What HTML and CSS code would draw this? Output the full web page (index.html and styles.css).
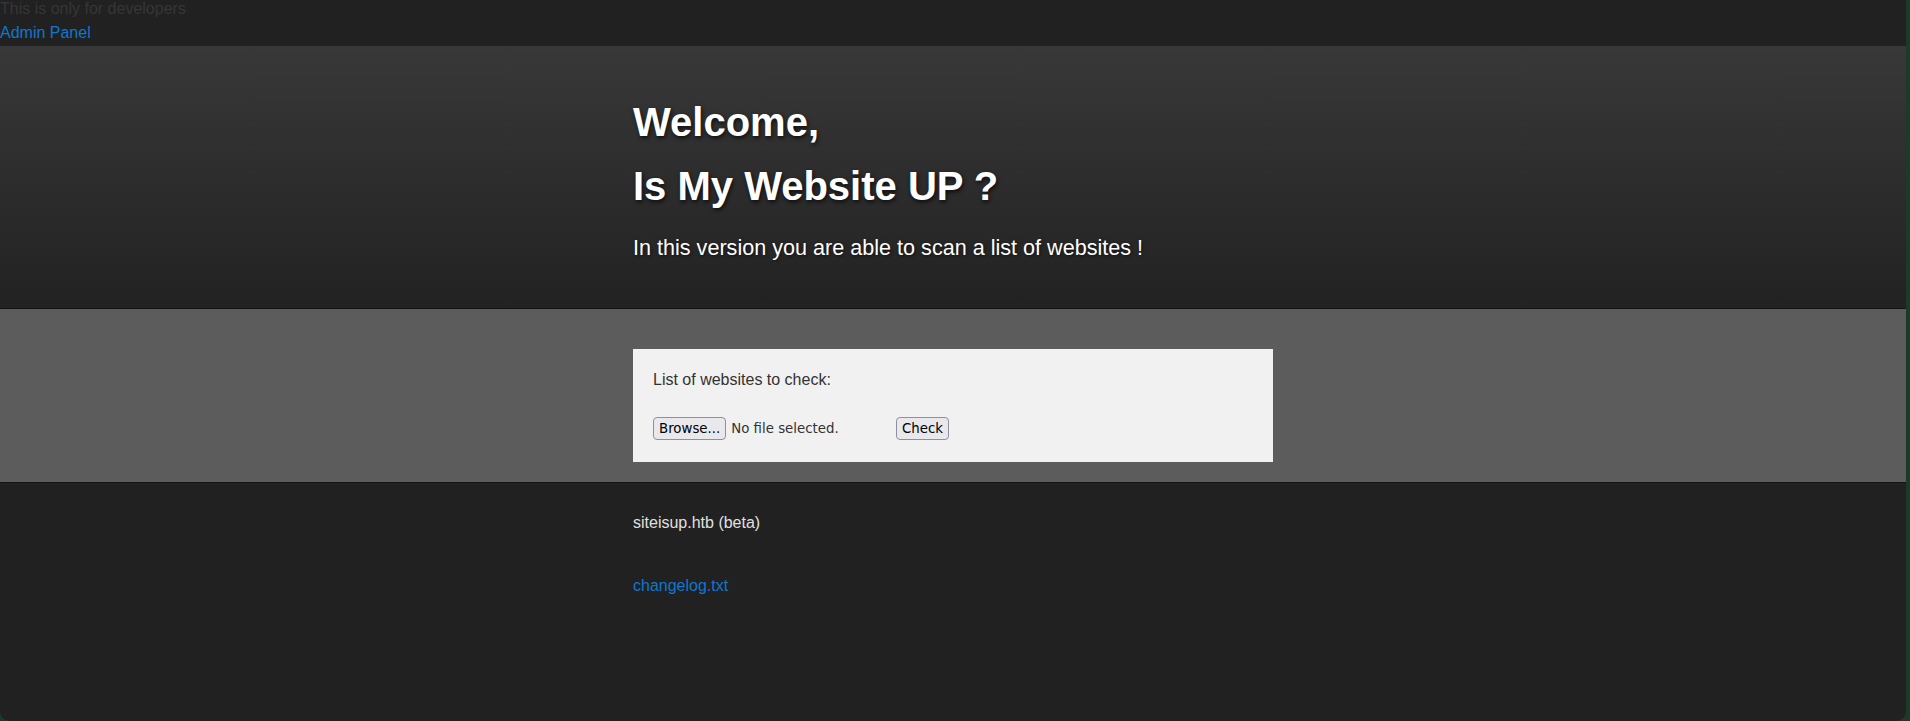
FILE: index.html
```html
<!DOCTYPE html>
<html lang="en">
<head>
<meta charset="utf-8">
<title>Is My Website UP ?</title>
<link rel="stylesheet" href="styles.css">
</head>
<body>
<div class="page">
  <div class="devbar">
    <div class="devnote">This is only for developers</div>
    <a class="devlink" href="#">Admin Panel</a>
  </div>
  <header class="hero">
    <div class="container">
      <h1 class="title"><span class="title-line">Welcome,</span><span class="title-line">Is My Website UP ?</span></h1>
      <p class="lead">In this version you are able to scan a list of websites !</p>
    </div>
  </header>
  <section class="scan">
    <div class="container">
      <form class="card">
        <div class="card-label">List of websites to check:</div>
        <div class="card-row">
          <div class="file-input">
            <span class="btn">Browse...</span>
            <span class="file-name">No file selected.</span>
          </div>
          <button class="btn" type="button">Check</button>
        </div>
      </form>
    </div>
  </section>
  <footer class="footer">
    <div class="container">
      <div class="footer-site">siteisup.htb (beta)</div>
      <a class="footer-link" href="#">changelog.txt</a>
    </div>
  </footer>
</div>
</body>
</html>
```
FILE: styles.css
```css
html {
  margin: 0;
  height: 100%;
  background: #1c3a29;
}
body {
  margin: 0;
  height: 100%;
  font-family: "Liberation Sans", Arial, sans-serif;
  font-size: 16px;
}
.page {
  width: calc(100% - 4px);
  min-height: 721px;
  background: #212121;
  border-radius: 0 0 10px 10px;
  overflow: hidden;
}
.container {
  width: 640px;
  margin: 0 auto;
}
.devbar {
  height: 46px;
  background: #212121;
  line-height: 18px;
}
.devnote {
  color: #363636;
}
.devlink {
  display: block;
  margin-top: 6px;
  color: #0d77d0;
  text-decoration: none;
}
.hero {
  box-sizing: border-box;
  height: 263px;
  padding-top: 44px;
  background: linear-gradient(#383838, #222222);
  border-bottom: 1px solid #121212;
}
.title {
  margin: 0;
  font-size: 40px;
  font-weight: bold;
  line-height: 64px;
  color: #ffffff;
  text-shadow: 1px 2px 4px rgba(0, 0, 0, 0.75);
}
.title-line {
  display: block;
}
.lead {
  margin: 16.5px 0 0;
  font-size: 21.6px;
  line-height: 25px;
  color: #ffffff;
  text-shadow: 1px 1px 3px rgba(0, 0, 0, 0.6);
}
.scan {
  background: #5d5c5d;
  padding: 40px 0 20px;
  border-bottom: 1px solid #151515;
}
.card {
  margin: 0;
  background: #f1f1f1;
  padding: 22px 20px 22px;
  color: #333333;
}
.card-label {
  line-height: 18px;
}
.card-row {
  display: flex;
  align-items: baseline;
  margin-top: 28px;
  font-family: "DejaVu Sans", sans-serif;
  font-size: 13.33px;
}
.file-input {
  display: flex;
  align-items: baseline;
  width: 239px;
  margin-right: 4px;
}
.btn {
  display: inline-block;
  box-sizing: border-box;
  height: 23px;
  padding: 3px 5px;
  margin: 0;
  background: #e9e9ed;
  border: 1px solid #8f8f9d;
  border-radius: 4px;
  color: #000000;
  font-family: "DejaVu Sans", sans-serif;
  font-size: 13.33px;
  line-height: 15px;
}
.file-name {
  margin-left: 5px;
  color: #333333;
}
.footer {
  padding-top: 31px;
}
.footer-site {
  color: #e0e0e0;
  line-height: 18px;
}
.footer-link {
  display: block;
  margin-top: 45px;
  line-height: 18px;
  color: #0d77d0;
  text-decoration: none;
}
```
